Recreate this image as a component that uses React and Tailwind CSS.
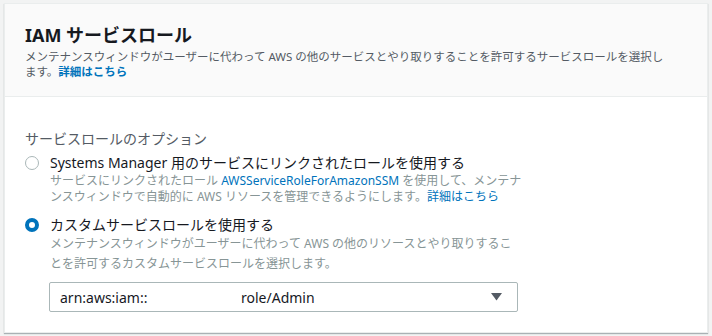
import React, { useState } from 'react';

const font = { fontFamily: '"Noto Sans", "Noto Sans CJK JP", sans-serif' };

const Radio = ({ checked }) => (
  <span
    className={`inline-block w-[14px] h-[14px] rounded-full bg-white shrink-0 ${
      checked ? 'border-[4px] border-[#0073bb]' : 'border-[1.5px] border-[#aab7b8]'
    }`}
  />
);

const App = () => {
  const [role, setRole] = useState('custom');

  return (
    <div className="w-[712px] h-[336px] bg-[#f2f3f3] pt-[3px] px-[4px] overflow-hidden" style={font}>
      <div className="bg-white border border-[#eaeded] shadow-[0_1px_1px_0_rgba(0,28,36,0.3)] h-[330px]">
        {/* header */}
        <div className="bg-[#fafafa] border-b border-[#eaeded] pt-[20px] pb-[17px] px-[20px]">
          <h2 className="text-[18px] leading-[22px] font-bold text-[#16191f]">IAM サービスロール</h2>
          <p className="mt-[3px] text-[11.5px] leading-[15px] text-[#545b64]">
            メンテナンスウィンドウがユーザーに代わって AWS の他のサービスとやり取りすることを許可するサービスロールを選択し
            <br />
            ます。<span className="text-[#0073bb] font-bold">詳細はこちら</span>
          </p>
        </div>

        {/* body */}
        <div className="pt-[32px] px-[20px]">
          <div className="text-[14px] leading-[20px] text-[#545b64]">サービスロールのオプション</div>

          <div className="mt-[4px] flex gap-[11px] cursor-pointer" onClick={() => setRole('linked')}>
            <div className="h-[20px] flex items-center">
              <Radio checked={role === 'linked'} />
            </div>
            <div>
              <div className="text-[14px] leading-[20px] text-[#16191f]">
                Systems Manager 用のサービスにリンクされたロールを使用する
              </div>
              <div className="text-[12px] leading-[16px] text-[#879596]">
                サービスにリンクされたロール <span className="text-[#0073bb]">AWSServiceRoleForAmazonSSM</span> を使用して、メンテナ
                <br />
                ンスウィンドウで自動的に AWS リソースを管理できるようにします。<span className="text-[#0073bb]">詳細はこちら</span>
              </div>
            </div>
          </div>

          <div className="mt-[10px] flex gap-[11px] cursor-pointer" onClick={() => setRole('custom')}>
            <div className="h-[20px] flex items-center">
              <Radio checked={role === 'custom'} />
            </div>
            <div>
              <div className="text-[14px] leading-[20px] text-[#16191f]">カスタムサービスロールを使用する</div>
              <div className="-mt-[1px] text-[12px] leading-[20px] text-[#879596]">
                メンテナンスウィンドウがユーザーに代わって AWS の他のリソースとやり取りするこ
                <br />
                とを許可するカスタムサービスロールを選択します。
              </div>
              <div className="mt-[8px] -ml-[1px] w-[469px] h-[30px] border border-[#aab7b8] rounded-[2px] bg-white flex items-center pl-[10px] pr-[15px]">
                <span className="text-[14px] text-[#16191f] inline-block w-[181px]">arn:aws:iam::</span>
                <span className="text-[14px] text-[#16191f]">role/Admin</span>
                <svg className="ml-auto" width="11" height="8" viewBox="0 0 11 8">
                  <path d="M0 0 H11 L5.5 7.5 Z" fill="#545b64" />
                </svg>
              </div>
            </div>
          </div>
        </div>
      </div>
    </div>
  );
};

export default App;
